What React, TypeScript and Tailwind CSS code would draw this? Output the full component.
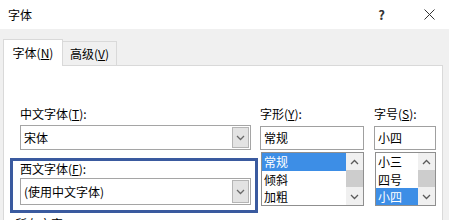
import React from "react";

const font = { fontFamily: '"Noto Sans CJK SC", "Noto Sans", sans-serif' };

function Chevron({ up = false, className = "" }: { up?: boolean; className?: string }) {
  return (
    <svg width="9" height="6" viewBox="0 0 9 6" className={className}>
      <polyline
        points={up ? "1,5 4.5,1.5 8,5" : "1,1 4.5,4.5 8,1"}
        fill="none"
        stroke="currentColor"
        strokeWidth="1.3"
      />
    </svg>
  );
}

function Combo({ text, h }: { text: string; h: string }) {
  return (
    <div className={`flex w-[231px] ${h} items-stretch border border-[#a5a5a5] bg-white`}>
      <div className="flex flex-1 items-center pl-[3px] text-[12px] leading-[15px] text-black">{text}</div>
      <div className="m-px flex w-[17px] items-center justify-center border border-[#b5b5b5] bg-[#e3e3e3] text-[#6a6a6a]">
        <Chevron />
      </div>
    </div>
  );
}

function ScrollBar() {
  return (
    <div className="flex w-[17px] flex-col bg-[#f0f0f0] text-[#5a5a5a]">
      <div className="flex h-[17px] items-center justify-center">
        <Chevron up />
      </div>
      <div className="h-[17px] bg-[#cdcdcd]" />
      <div className="flex-1" />
      <div className="flex h-[17px] items-center justify-center">
        <Chevron />
      </div>
    </div>
  );
}

function ListBox({ items, sel, w }: { items: string[]; sel: number; w: string }) {
  return (
    <div className={`mt-[2px] flex h-[54px] ${w} overflow-hidden border border-[#8f8f8f] bg-white`}>
      <div className="flex flex-1 flex-col">
        {items.map((it, i) => (
          <div
            key={it}
            className={`flex h-[17.5px] shrink-0 items-center pl-[2px] text-[12px] leading-[15px] ${
              i === sel ? "bg-[#3d8ee6] text-white" : "text-black"
            }`}
          >
            {it}
          </div>
        ))}
      </div>
      <ScrollBar />
    </div>
  );
}

export default function App() {
  return (
    <div className="relative flex h-[220px] w-[449px] flex-col overflow-hidden bg-[#f0f0f0]" style={font}>
      {/* title bar */}
      <div className="flex h-[29px] shrink-0 items-center bg-white pl-[8px] text-[12px] text-black">
        <span>字体</span>
        <span className="ml-auto mr-[39px] text-[13px] font-bold text-[#333]">?</span>
        <svg width="11" height="11" viewBox="0 0 11 11" className="mr-[14px]">
          <line x1="0.5" y1="0.5" x2="10.5" y2="10.5" stroke="#333" strokeWidth="1" />
          <line x1="10.5" y1="0.5" x2="0.5" y2="10.5" stroke="#333" strokeWidth="1" />
        </svg>
      </div>
      {/* tab strip */}
      <div className="flex h-[36px] shrink-0 items-end pl-[3px]">
        <div className="relative z-10 -mb-px flex h-[27px] w-[60px] items-center justify-center border border-b-0 border-[#d9d9d9] bg-white text-[12px] text-black">
          字体(<span className="underline">N</span>)
        </div>
        <div className="flex h-[24px] w-[54px] items-center justify-center border border-l-0 border-b-0 border-[#d9d9d9] text-[12px] text-black">
          高级(<span className="underline">V</span>)
        </div>
      </div>
      {/* panel */}
      <div className="ml-[3px] flex w-[440px] flex-1 border border-[#d9d9d9] bg-white pl-[6px] pt-[40px]">
        {/* left column */}
        <div className="flex w-[248px] flex-col">
          <div className="pl-[10px] text-[12px] leading-[15px] text-black">
            中文字体(<span className="underline">T</span>):
          </div>
          <div className="mt-[4px] pl-[10px]">
            <Combo text="宋体" h="h-[25px]" />
          </div>
          <div className="mt-[8px] flex h-[55px] flex-col border-[3px] border-[#3a5a9f] pl-[7px]">
            <div className="text-[12px] leading-[15px] text-black">
              西文字体(<span className="underline">F</span>):
            </div>
            <div className="mt-[2px]">
              <Combo text="(使用中文字体)" h="h-[27px]" />
            </div>
          </div>
          <div className="mt-[3px] pl-[5px] text-[12px] leading-[15px] text-black">所有文字</div>
        </div>
        {/* style column */}
        <div className="ml-[2px] flex w-[104px] flex-col">
          <div className="text-[12px] leading-[15px] text-black">
            字形(<span className="underline">Y</span>):
          </div>
          <div className="mt-[5px] flex h-[24px] items-center border border-[#a0a0a0] pl-[3px] text-[12px] text-black">
            常规
          </div>
          <ListBox items={["常规", "倾斜", "加粗"]} sel={0} w="w-[103px] ml-px" />
        </div>
        {/* size column */}
        <div className="ml-[10px] flex w-[62px] flex-col">
          <div className="text-[12px] leading-[15px] text-black">
            字号(<span className="underline">S</span>):
          </div>
          <div className="mt-[5px] flex h-[24px] items-center border border-[#a0a0a0] pl-[3px] text-[12px] text-black">
            小四
          </div>
          <ListBox items={["小三", "四号", "小四"]} sel={2} w="w-[61px] ml-px" />
        </div>
      </div>
    </div>
  );
}
